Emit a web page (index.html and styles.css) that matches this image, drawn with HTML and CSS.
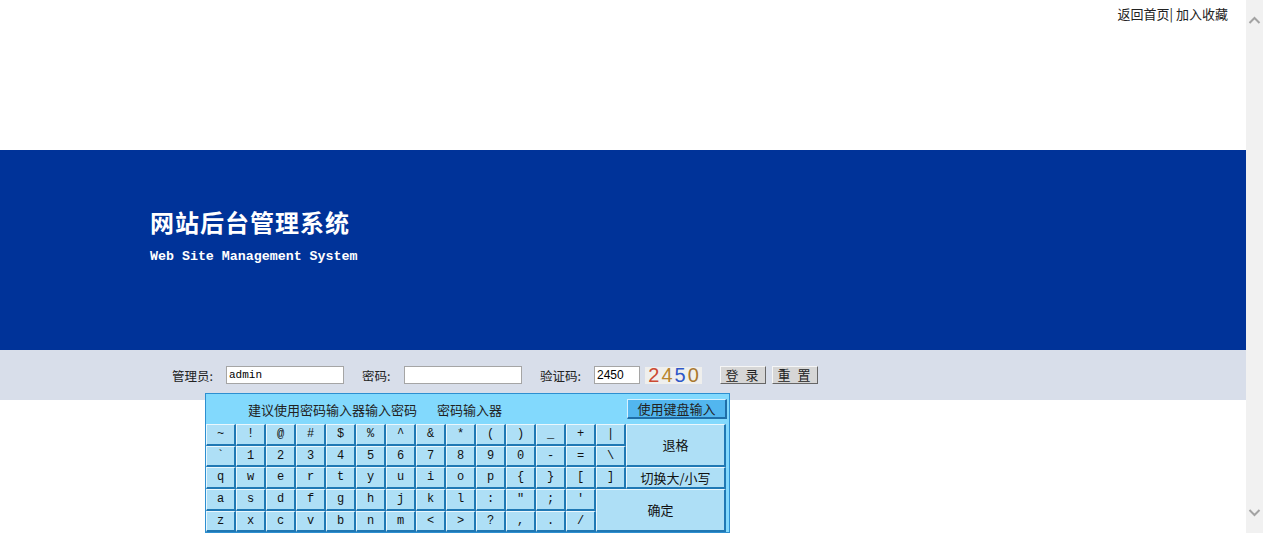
FILE: index.html
```html
<!DOCTYPE html>
<html lang="zh-CN">
<head>
    <meta charset="UTF-8">
    <title>网站后台管理系统</title>
    <link rel="stylesheet" href="styles.css">
</head>
<body>
    <div class="toplinks">
        <a href="#">返回首页</a>| <a href="#">加入收藏</a>
    </div>

    <div class="banner">
        <h1>网站后台管理系统</h1>
        <p>Web Site Management System</p>
    </div>

    <form class="loginbar">
        <span class="lbl lbl-user">管理员:</span>
        <input type="text" class="field field-user" value="admin">
        <span class="lbl lbl-pwd">密码:</span>
        <input type="password" class="field field-pwd">
        <span class="lbl lbl-code">验证码:</span>
        <input type="text" class="field field-code" value="2450">
        <span class="captcha"><i class="c1">2</i><i class="c2">4</i><i class="c3">5</i><i class="c4">0</i></span>
        <button type="button" class="btn btn-login">登 录</button>
        <button type="reset" class="btn btn-reset">重 置</button>
    </form>

    <!-- soft keyboard popup -->
    <div class="keyboard">
        <div class="kb-head">
            <span class="kb-tip">建议使用密码输入器输入密码</span>
            <span class="kb-title">密码输入器</span>
            <span class="kb-switch">使用键盘输入</span>
        </div>
        <div class="kb-keys">
            <div class="key big key-back">退格</div>
            <div class="key big key-caps">切换大/小写</div>
            <div class="key big key-ok">确定</div>

            <div class="key">~</div><div class="key">!</div><div class="key">@</div><div class="key">#</div><div class="key">$</div><div class="key">%</div><div class="key">^</div><div class="key">&amp;</div><div class="key">*</div><div class="key">(</div><div class="key">)</div><div class="key">_</div><div class="key">+</div><div class="key">|</div>

            <div class="key">`</div><div class="key">1</div><div class="key">2</div><div class="key">3</div><div class="key">4</div><div class="key">5</div><div class="key">6</div><div class="key">7</div><div class="key">8</div><div class="key">9</div><div class="key">0</div><div class="key">-</div><div class="key">=</div><div class="key">\</div>

            <div class="key">q</div><div class="key">w</div><div class="key">e</div><div class="key">r</div><div class="key">t</div><div class="key">y</div><div class="key">u</div><div class="key">i</div><div class="key">o</div><div class="key">p</div><div class="key">{</div><div class="key">}</div><div class="key">[</div><div class="key">]</div>

            <div class="key">a</div><div class="key">s</div><div class="key">d</div><div class="key">f</div><div class="key">g</div><div class="key">h</div><div class="key">j</div><div class="key">k</div><div class="key">l</div><div class="key">:</div><div class="key">"</div><div class="key">;</div><div class="key">'</div>

            <div class="key">z</div><div class="key">x</div><div class="key">c</div><div class="key">v</div><div class="key">b</div><div class="key">n</div><div class="key">m</div><div class="key">&lt;</div><div class="key">&gt;</div><div class="key">?</div><div class="key">,</div><div class="key">.</div><div class="key">/</div>
        </div>
    </div>

    <!-- window scrollbar -->
    <div class="scrollbar">
        <svg class="arrow" width="17" height="17" viewBox="0 0 17 17"><path d="M3.5 11 L8.5 6 L13.5 11" fill="none" stroke="#a3a3a3" stroke-width="2"/></svg>
        <svg class="arrow" width="17" height="17" viewBox="0 0 17 17"><path d="M3.5 6 L8.5 11 L13.5 6" fill="none" stroke="#a3a3a3" stroke-width="2"/></svg>
    </div>
</body>
</html>
```

FILE: styles.css
```css
body {
    margin: 0 17px 0 0;
    background-color: #fff;
    color: #222;
    font-family: "Noto Sans CJK SC", "Liberation Sans", sans-serif;
    font-size: 12px;
}

.scrollbar {
    position: fixed;
    top: 0;
    right: 0;
    width: 17px;
    height: 100%;
    padding: 12px 0;
    box-sizing: border-box;
    display: flex;
    flex-direction: column;
    justify-content: space-between;
    background-color: #f1f1f1;
}
.arrow {
    display: block;
}

.toplinks {
    height: 150px;
    box-sizing: border-box;
    padding: 5px 18px 0 0;
    text-align: right;
    line-height: 18px;
    font-size: 13px;
    color: #222;
}
.toplinks a {
    color: #222;
    text-decoration: none;
}

.banner {
    height: 200px;
    box-sizing: border-box;
    padding: 56px 0 0 150px;
    background-color: #003399;
    color: #fff;
}
.banner h1 {
    margin: 0;
    font-size: 24px;
    line-height: 32px;
    letter-spacing: 1px;
    font-weight: bold;
}
.banner p {
    margin: 11px 0 0;
    font-family: "Liberation Mono", monospace;
    font-size: 13.3px;
    font-weight: bold;
    line-height: 16px;
}

.loginbar {
    height: 50px;
    margin: 0;
    padding-left: 172px;
    display: flex;
    align-items: center;
    background-color: #d8deea;
}
.lbl {
    color: #222;
    font-size: 12.5px;
}
.lbl-user { width: 54px; }
.lbl-pwd { width: 42px; margin-left: 18px; }
.lbl-code { width: 54px; margin-left: 18px; }

.field {
    height: 18px;
    box-sizing: border-box;
    margin: 0;
    padding: 0 2px;
    border: 1px solid #a5a5a5;
    background: #fff;
    font-family: "Liberation Sans", sans-serif;
    font-size: 12px;
}
.field-user {
    width: 118px;
    font-family: "Liberation Mono", monospace;
    font-size: 11px;
}
.field-pwd { width: 118px; }
.field-code { width: 46px; }

.captcha {
    width: 57px;
    height: 17px;
    margin-left: 5px;
    display: flex;
    justify-content: center;
    gap: 2px;
    background-color: #efefed;
    font-family: "Liberation Sans", sans-serif;
    font-size: 20px;
    line-height: 17px;
}
.captcha i { font-style: normal; }
.captcha .c1 { color: #cc4a33; }
.captcha .c2 { color: #b8862f; }
.captcha .c3 { color: #2f57c9; }
.captcha .c4 { color: #a9782e; }

.btn {
    width: 46px;
    height: 18px;
    margin: 0 0 0 6px;
    padding: 0;
    border: 1px solid;
    border-color: #f6f6f6 #666 #666 #f6f6f6;
    background-color: #d6d6d6;
    color: #222;
    font-family: "Noto Sans CJK SC", sans-serif;
    font-size: 13px;
    line-height: 16px;
    letter-spacing: 2px;
}
.btn-login { margin-left: 18px; }

.keyboard {
    position: absolute;
    left: 205px;
    top: 393px;
    width: 523px;
    border: 1px solid #2d8fd0;
    background-color: #82d9fd;
}
.kb-head {
    height: 30px;
    display: flex;
    align-items: center;
    padding-left: 42px;
    font-size: 13px;
    color: #222;
}
.kb-title {
    margin-left: 20px;
}
.kb-switch {
    margin-left: auto;
    margin-right: 2px;
    width: 100px;
    height: 20px;
    box-sizing: border-box;
    border-style: solid;
    border-width: 1px 2px 2px 1px;
    border-color: #d8f1ff #1f6ea8 #1f6ea8 #d8f1ff;
    background-color: #52b6ef;
    text-align: center;
    line-height: 17px;
}

.kb-keys {
    display: grid;
    grid-template-columns: repeat(14, 30px) 100px;
    grid-template-rows: 22px 21px 22px 22px 21px;
}
.key {
    box-sizing: border-box;
    border-style: solid;
    border-width: 1px 2px 2px 1px;
    border-color: #eaf7fd #1f78b4 #1f78b4 #eaf7fd;
    background-color: #aedff6;
    color: #111;
    font-family: "Liberation Mono", monospace;
    font-size: 12px;
    line-height: 18px;
    text-align: center;
}
.key.big {
    display: flex;
    align-items: center;
    justify-content: center;
    font-family: "Noto Sans CJK SC", sans-serif;
    font-size: 13px;
}
.key-back {
    grid-column: 15;
    grid-row: 1 / span 2;
}
.key-caps {
    grid-column: 15;
    grid-row: 3;
}
.key-ok {
    grid-column: 14 / span 2;
    grid-row: 4 / span 2;
}
```
